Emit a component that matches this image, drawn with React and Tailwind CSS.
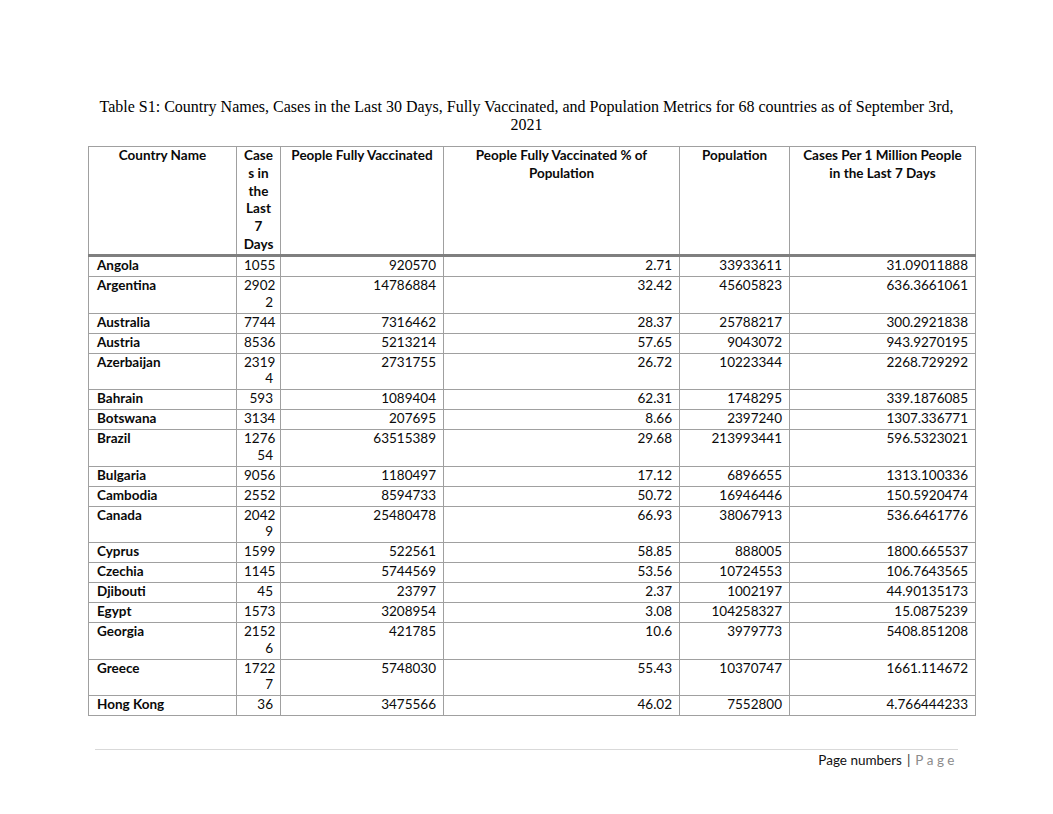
import React from 'react';

const rows = [
  { name: 'Angola', cases: ['1055'], vacc: '920570', pct: '2.71', pop: '33933611', per: '31.09011888' },
  { name: 'Argentina', cases: ['2902', '2'], vacc: '14786884', pct: '32.42', pop: '45605823', per: '636.3661061' },
  { name: 'Australia', cases: ['7744'], vacc: '7316462', pct: '28.37', pop: '25788217', per: '300.2921838' },
  { name: 'Austria', cases: ['8536'], vacc: '5213214', pct: '57.65', pop: '9043072', per: '943.9270195' },
  { name: 'Azerbaijan', cases: ['2319', '4'], vacc: '2731755', pct: '26.72', pop: '10223344', per: '2268.729292' },
  { name: 'Bahrain', cases: ['593'], vacc: '1089404', pct: '62.31', pop: '1748295', per: '339.1876085' },
  { name: 'Botswana', cases: ['3134'], vacc: '207695', pct: '8.66', pop: '2397240', per: '1307.336771' },
  { name: 'Brazil', cases: ['1276', '54'], vacc: '63515389', pct: '29.68', pop: '213993441', per: '596.5323021' },
  { name: 'Bulgaria', cases: ['9056'], vacc: '1180497', pct: '17.12', pop: '6896655', per: '1313.100336' },
  { name: 'Cambodia', cases: ['2552'], vacc: '8594733', pct: '50.72', pop: '16946446', per: '150.5920474' },
  { name: 'Canada', cases: ['2042', '9'], vacc: '25480478', pct: '66.93', pop: '38067913', per: '536.6461776' },
  { name: 'Cyprus', cases: ['1599'], vacc: '522561', pct: '58.85', pop: '888005', per: '1800.665537' },
  { name: 'Czechia', cases: ['1145'], vacc: '5744569', pct: '53.56', pop: '10724553', per: '106.7643565' },
  { name: 'Djibouti', cases: ['45'], vacc: '23797', pct: '2.37', pop: '1002197', per: '44.90135173' },
  { name: 'Egypt', cases: ['1573'], vacc: '3208954', pct: '3.08', pop: '104258327', per: '15.0875239' },
  { name: 'Georgia', cases: ['2152', '6'], vacc: '421785', pct: '10.6', pop: '3979773', per: '5408.851208' },
  { name: 'Greece', cases: ['1722', '7'], vacc: '5748030', pct: '55.43', pop: '10370747', per: '1661.114672' },
  { name: 'Hong Kong', cases: ['36'], vacc: '3475566', pct: '46.02', pop: '7552800', per: '4.766444233' },
];

const th = 'border border-[#a0a0a0] border-b-[3px] border-b-[#7f7f7f] align-top text-center font-bold leading-[17.8px] px-[4px] pt-0 pb-0';
const td = 'border border-[#a0a0a0] align-top leading-[16.5px] px-[7px] pt-0 pb-[2.5px]';

const App = () => {
  return (
    <div className="w-[1053px] h-[814px] bg-white text-black overflow-hidden">
      {/* caption */}
      <div className="pt-[98px] text-center font-['Liberation_Serif',serif] text-[16px] leading-[18px]">
        Table S1: Country Names, Cases in the Last 30 Days, Fully Vaccinated, and Population Metrics for 68 countries as of September 3rd,
        <br />
        2021
      </div>

      <table className="mt-[12px] ml-[88px] w-[887px] table-fixed border-collapse font-['Lato',sans-serif] text-[13.5px] text-[#0a0a0a]">
        <colgroup>
          <col className="w-[148px]" />
          <col className="w-[44px]" />
          <col className="w-[163px]" />
          <col className="w-[236px]" />
          <col className="w-[110px]" />
          <col className="w-[186px]" />
        </colgroup>
        <thead>
          <tr className="h-[109px]">
            <th className={th}>Country Name</th>
            <th className={th + ' px-0'}>
              Case<br />s in<br />the<br />Last<br />7<br />Days
            </th>
            <th className={th}>People Fully Vaccinated</th>
            <th className={th}>
              People Fully Vaccinated % of<br />Population
            </th>
            <th className={th}>Population</th>
            <th className={th}>
              Cases Per 1 Million People<br />in the Last 7 Days
            </th>
          </tr>
        </thead>
        <tbody>
          {rows.map((r) => (
            <tr key={r.name}>
              <td className={td + ' font-bold text-left pl-[8px]'}>{r.name}</td>
              <td className={td + ' text-right'}>
                {r.cases.map((c, i) => (
                  <div key={i}>{c}</div>
                ))}
              </td>
              <td className={td + ' text-right'}>{r.vacc}</td>
              <td className={td + ' text-right'}>{r.pct}</td>
              <td className={td + ' text-right'}>{r.pop}</td>
              <td className={td + ' text-right'}>{r.per}</td>
            </tr>
          ))}
        </tbody>
      </table>

      {/* footer */}
      <div className="mt-[33px] ml-[95px] w-[863px] border-t border-[#d9d9d9] pt-[1px] text-right font-['Lato',sans-serif] text-[13.5px] leading-[18px]">
        <span className="text-[#111]">Page numbers</span>
        <span className="text-[#333] mx-[5px]">|</span>
        <span className="text-[#8c8c8c] tracking-[3.5px]">Page</span>
      </div>
    </div>
  );
};

export default App;
